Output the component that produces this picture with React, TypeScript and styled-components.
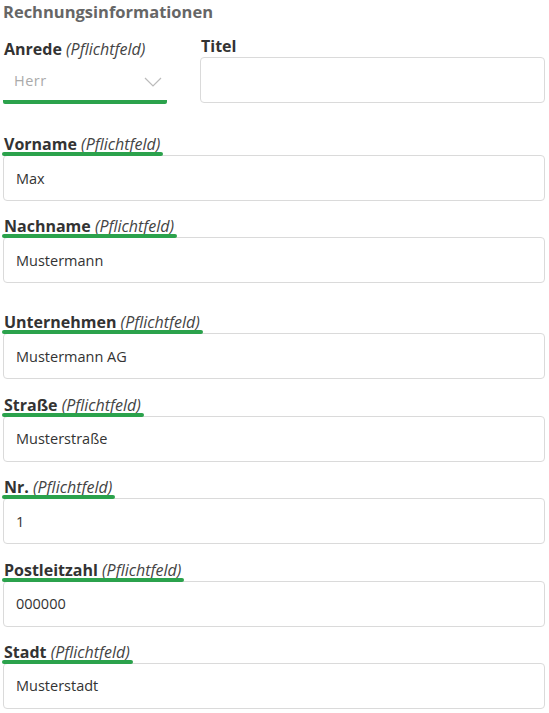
import React from "react";
import styled, { createGlobalStyle } from "styled-components";

const green = "#2ba24c";

const GlobalStyle = createGlobalStyle`
  html, body {
    margin: 0;
    padding: 0;
    background: #ffffff;
  }
  body {
    font-family: "Open Sans", "Liberation Sans", sans-serif;
    color: #333;
  }
`;

const Form = styled.form`
  width: 542px;
  padding: 0 4px 0 3px;
`;

const Heading = styled.h3`
  margin: 0;
  font-size: 16.5px;
  line-height: 24px;
  font-weight: 700;
  color: #666;
`;

const TopRow = styled.div`
  display: grid;
  grid-template-columns: 164px 1fr;
  column-gap: 33px;
  margin-top: 12px;
  margin-bottom: 30px;
`;

const Field = styled.div<{ $gap?: number; $shift?: number }>`
  display: flex;
  flex-direction: column;
  align-items: flex-start;
  margin-bottom: ${({ $gap }) => ($gap ?? 15.4)}px;
  padding-top: ${({ $shift }) => ($shift ?? 0)}px;
`;

const Label = styled.label<{ $marked?: boolean }>`
  position: relative;
  display: inline-block;
  font-size: 16px;
  line-height: 20px;
  font-weight: 700;
  color: #333;
  margin-bottom: 1px;
  padding-left: 1px;

  &::after {
    content: "";
    display: ${({ $marked }) => ($marked ? "block" : "none")};
    position: absolute;
    left: -1px;
    right: -3px;
    bottom: -2px;
    height: 4px;
    border-radius: 2px;
    background: ${green};
  }
`;

const Hint = styled.span`
  font-weight: 400;
  font-style: italic;
  color: #444;
`;

const Input = styled.input`
  box-sizing: border-box;
  width: 100%;
  height: 46px;
  padding: 0 12px;
  border: 1px solid #dadada;
  border-radius: 4px;
  font-family: inherit;
  font-size: 14.5px;
  color: #333;
  background: #fff;
  outline: none;
`;

const SelectWrap = styled.div`
  position: relative;
  width: 100%;
  height: 40px;
  border-bottom: 4px solid ${green};
  border-radius: 2px;
`;

const Select = styled.select`
  appearance: none;
  width: 100%;
  height: 100%;
  border: none;
  background: transparent;
  padding: 0 11px;
  font-family: inherit;
  font-size: 14.5px;
  letter-spacing: 0.5px;
  color: #aaa;
  outline: none;
`;

const Chevron = styled.svg`
  position: absolute;
  right: 5px;
  top: 17px;
  pointer-events: none;
`;

type FieldDef = { label: string; value: string; gap?: number };

const fields: FieldDef[] = [
  { label: "Vorname", value: "Max" },
  { label: "Nachname", value: "Mustermann", gap: 29 },
  { label: "Unternehmen", value: "Mustermann AG" },
  { label: "Straße", value: "Musterstraße" },
  { label: "Nr.", value: "1" },
  { label: "Postleitzahl", value: "000000" },
  { label: "Stadt", value: "Musterstadt", gap: 4 },
];

const App = () => (
  <>
    <GlobalStyle />
    <Form>
      <Heading>Rechnungsinformationen</Heading>
      <TopRow>
        <Field $gap={0} $shift={3}>
          <Label>
            Anrede <Hint>(Pflichtfeld)</Hint>
          </Label>
          <SelectWrap>
            <Select defaultValue="Herr">
              <option>Herr</option>
              <option>Frau</option>
            </Select>
            <Chevron width="18" height="10" viewBox="0 0 18 10">
              <polyline points="1,1 9,9 17,1" fill="none" stroke="#bbb" strokeWidth="1.2" />
            </Chevron>
          </SelectWrap>
        </Field>
        <Field $gap={0}>
          <Label>Titel</Label>
          <Input defaultValue="" />
        </Field>
      </TopRow>
      {fields.map((f) => (
        <Field key={f.label} $gap={f.gap}>
          <Label $marked>
            {f.label} <Hint>(Pflichtfeld)</Hint>
          </Label>
          <Input defaultValue={f.value} />
        </Field>
      ))}
    </Form>
  </>
);

export default App;
